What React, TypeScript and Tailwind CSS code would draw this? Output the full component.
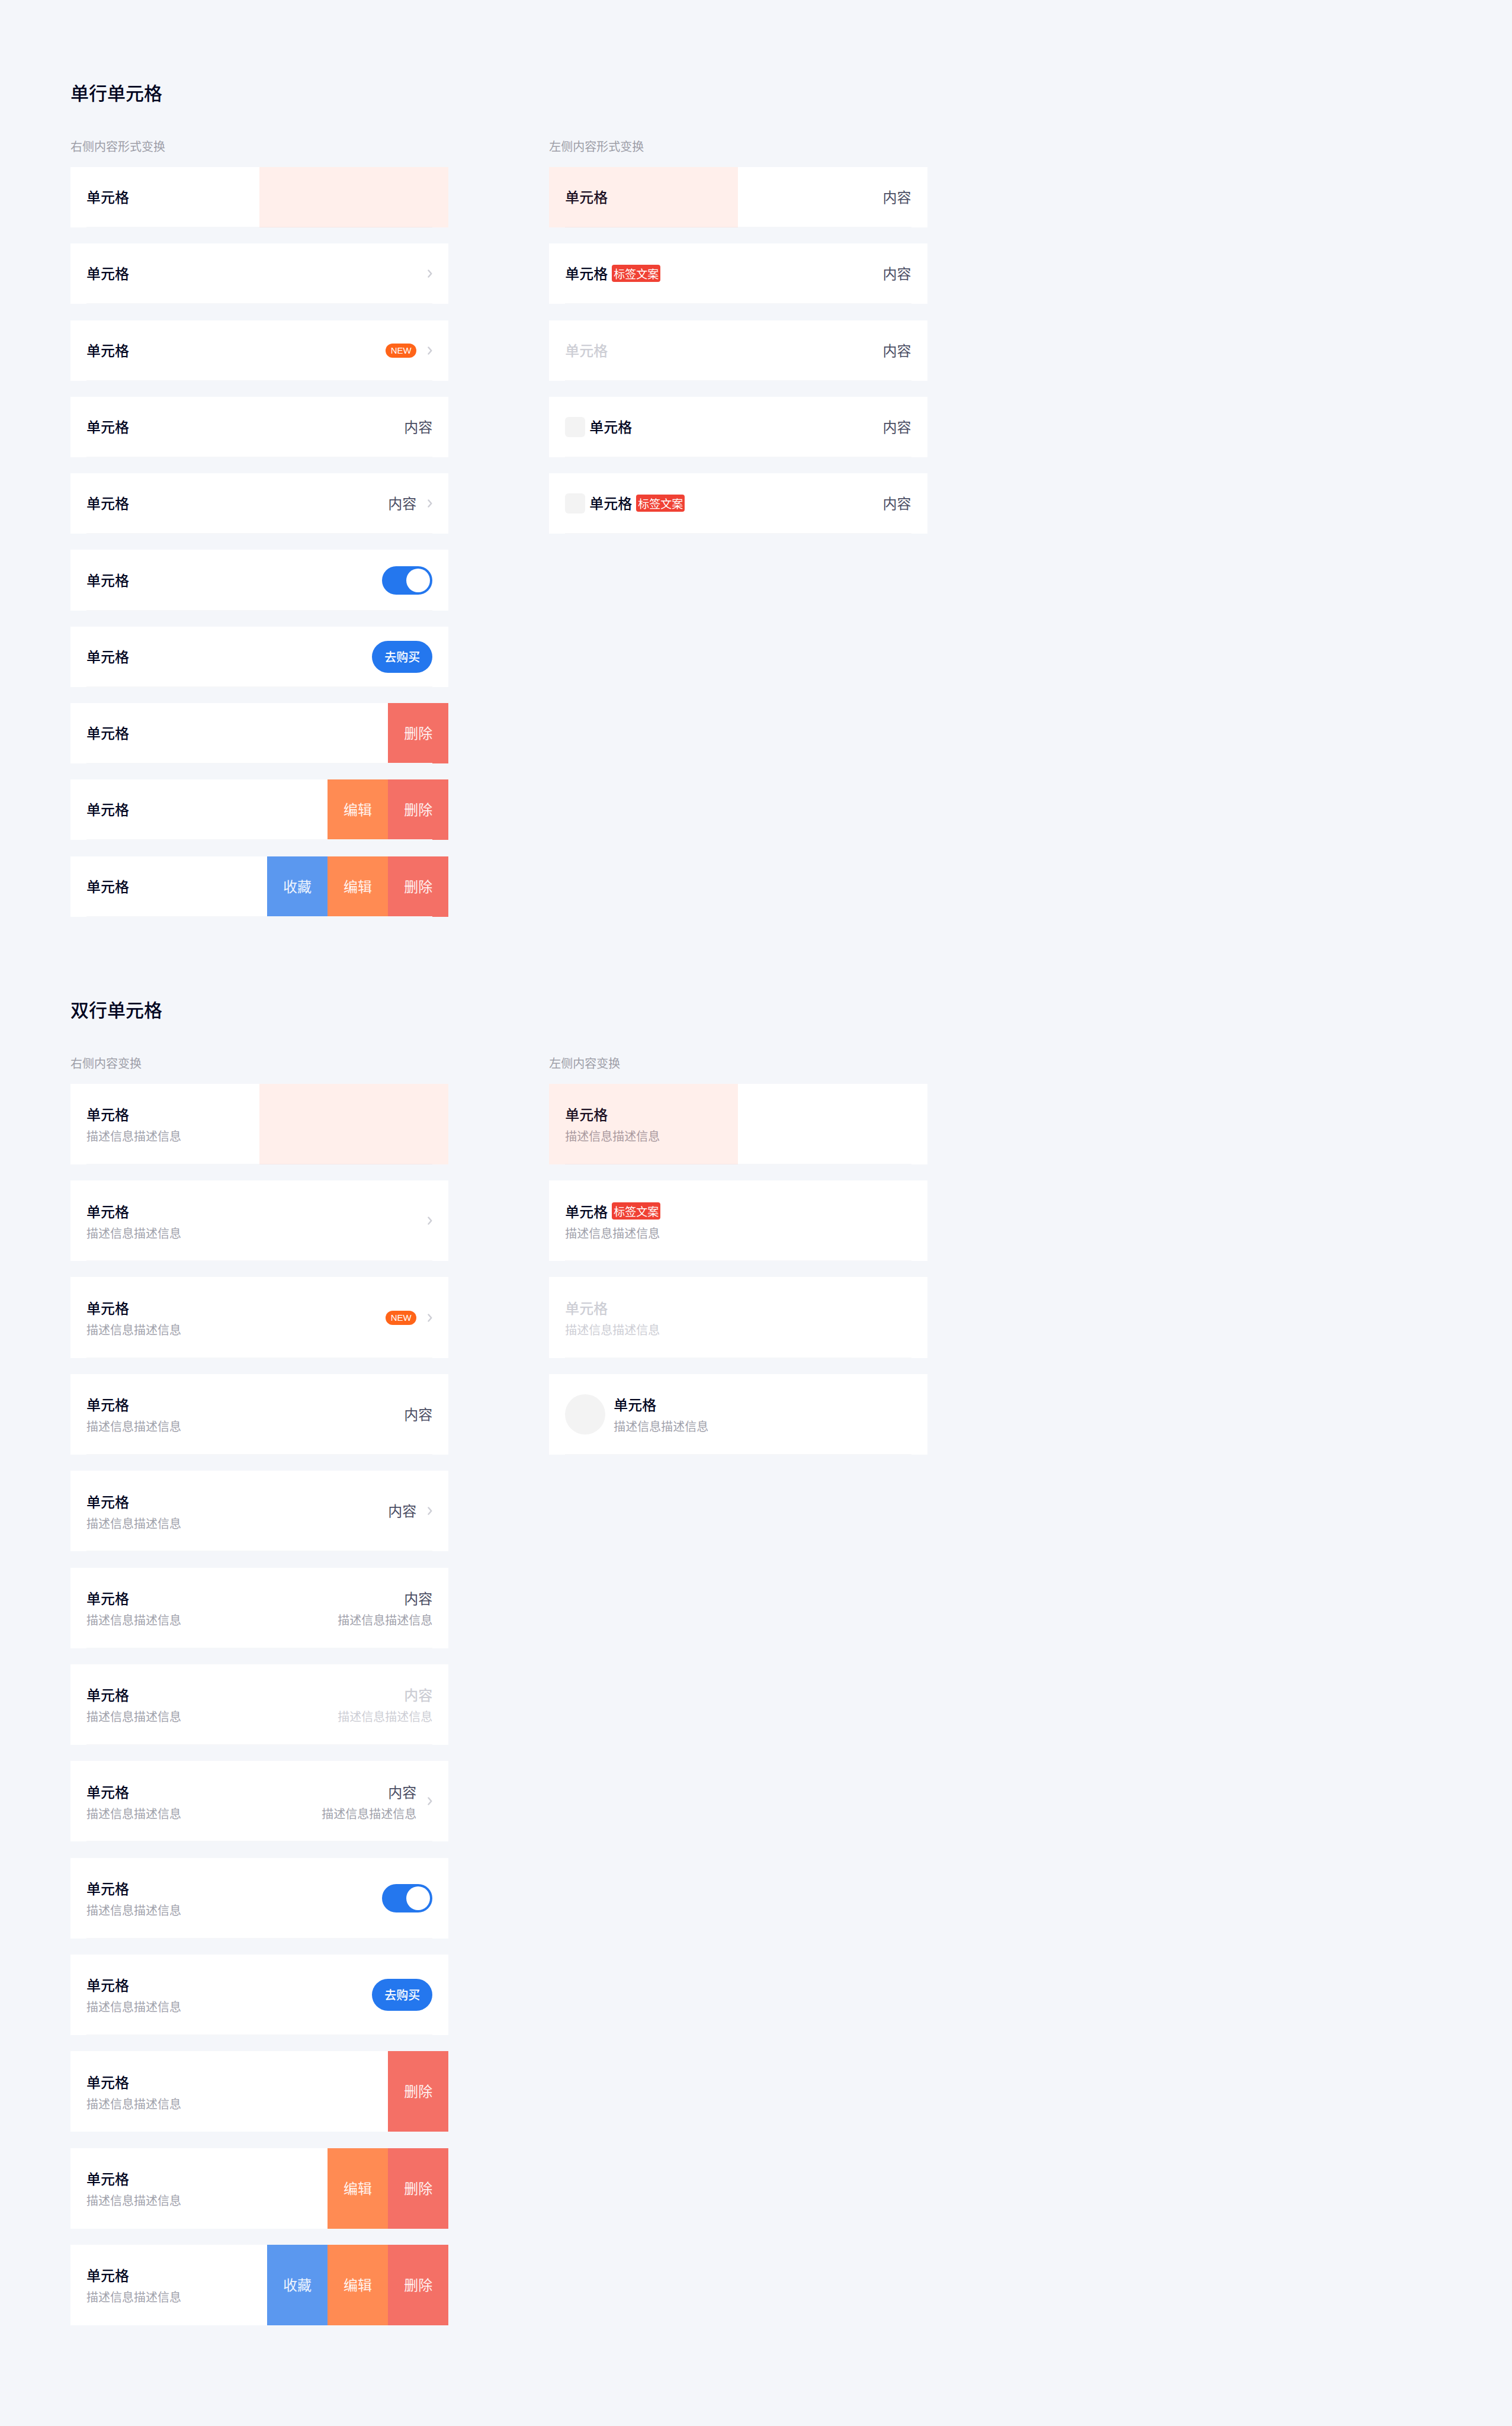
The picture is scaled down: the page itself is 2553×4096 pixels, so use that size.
import type { ReactNode } from "react";

function Chevron() {
  return (
    <svg className="h-[14px] w-2 shrink-0" viewBox="0 0 8 14" fill="none" aria-hidden="true">
      <path
        d="M1.5 1.5 L6.3 7 L1.5 12.5"
        stroke="#cdced5"
        strokeWidth="2.4"
        strokeLinecap="round"
        strokeLinejoin="round"
      />
    </svg>
  );
}

function NewBadge() {
  return (
    <span className="flex h-6 w-[52px] items-center justify-center rounded-full bg-[#ff6419] font-['Liberation_Sans',sans-serif] text-[15px] leading-6 text-white">
      NEW
    </span>
  );
}

function Tag() {
  return (
    <span className="rounded-[4px] bg-[#f04134] px-[3px] text-[19px] leading-[29px] text-white">标签文案</span>
  );
}

function Toggle() {
  return (
    <label className="relative flex h-12 w-[85px] cursor-pointer items-center">
      <input
        type="checkbox"
        role="switch"
        aria-label="单元格"
        defaultChecked
        className="peer h-full w-full cursor-pointer appearance-none rounded-full bg-gray-300 checked:bg-[#2477ee]"
      />
      <span className="pointer-events-none absolute left-1 size-10 rounded-full bg-white peer-checked:right-1 peer-checked:left-auto" />
    </label>
  );
}

function BuyButton() {
  return (
    <button type="button" className="h-[54px] w-[102px] rounded-full bg-[#2477ee] text-[20px] font-medium text-white">
      去购买
    </button>
  );
}

function Content({ desc, muted }: { desc?: string; muted?: boolean }) {
  return (
    <span className={`flex flex-col items-end gap-[5px] ${desc ? "" : "pb-[2px]"}`}>
      <span
        className={
          muted ? "text-[24px] leading-9 font-medium text-[#cdced5]" : "text-[24px] leading-9 text-[#4a4d63]"
        }
      >
        内容
      </span>
      {desc && (
        <span className={muted ? "text-[20px] leading-7 text-[#cdced5]" : "text-[20px] leading-7 text-[#a0a1ab]"}>
          {desc}
        </span>
      )}
    </span>
  );
}

const ACTIONS = {
  收藏: "bg-[#5b98ef]",
  编辑: "bg-[#ff8b53]",
  删除: "bg-[#f47066]",
};

type CellProps = {
  double?: boolean;
  media?: ReactNode;
  tag?: boolean;
  muted?: boolean;
  right?: ReactNode;
  arrow?: boolean;
  highlight?: "left" | "right";
  actions?: (keyof typeof ACTIONS)[];
};

function Cell({ double, media, tag, muted, right, arrow, highlight, actions }: CellProps) {
  return (
    <li
      className={`relative flex items-center bg-white px-[27px] ${double ? "aspect-[75/16]" : "aspect-[25/4]"}`}
    >
      {media}
      <div className={`flex flex-col gap-[5px] ${double ? "" : "pb-[2px]"}`}>
        <div className="flex items-center gap-[7px]">
          <span
            className={
              muted
                ? "text-[24px] leading-9 font-medium text-[#cdced5]"
                : "text-[24px] leading-9 font-medium text-[#02061f]"
            }
          >
            单元格
          </span>
          {tag && <Tag />}
        </div>
        {double && (
          <span
            className={muted ? "text-[20px] leading-7 text-[#cdced5]" : "text-[20px] leading-7 text-[#a0a1ab]"}
          >
            描述信息描述信息
          </span>
        )}
      </div>
      <div className="ml-auto flex items-center gap-[19px]">
        {right}
        {arrow && <Chevron />}
      </div>
      {!(double && actions) && <span className="absolute inset-x-[27px] bottom-0 z-10 h-px bg-[#f5f6f8]" />}
      {actions && (
        <div className="absolute inset-y-0 right-0 flex w-[48%] justify-end">
          {actions.map((name) => (
            <button key={name} type="button" className={`w-1/3 pb-[2px] text-[24px] text-white/90 ${ACTIONS[name]}`}>
              {name}
            </button>
          ))}
        </div>
      )}
      {highlight && (
        <span
          className={`absolute inset-y-0 z-20 w-1/2 bg-[#ff5f3c]/10 ${highlight === "left" ? "left-0" : "right-0"}`}
        />
      )}
    </li>
  );
}

function Column({ title, children }: { title: string; children: ReactNode }) {
  return (
    <div className="w-[25vw] shrink-0">
      <h3 className="text-[20px] leading-[30px] text-[#9d9ea8]">{title}</h3>
      <ul className="mt-5 flex flex-col gap-[1.065vw]">{children}</ul>
    </div>
  );
}

function Section({ title, children }: { title: string; children: ReactNode }) {
  return (
    <section>
      <h2 className="px-[119px] text-[31px] leading-[44px] font-medium text-[#02061f]">{title}</h2>
      <div className="mt-[54px] flex gap-[170px] pl-[119px]">{children}</div>
    </section>
  );
}

const DESC = "描述信息描述信息";

export default function App() {
  const square = <span className="mr-[7px] size-[34px] rounded-[6px] bg-[#f3f3f3]" />;
  const avatar = <span className="mr-[14px] size-[68px] rounded-full bg-[#f3f3f3]" />;

  return (
    <main className="flex min-h-screen flex-col gap-[134px] bg-[#f4f6fa] pt-[134px] pb-[134px] font-['Noto_Sans_CJK_SC',sans-serif]">
      <Section title="单行单元格">
        <Column title="右侧内容形式变换">
          <Cell highlight="right" />
          <Cell arrow />
          <Cell right={<NewBadge />} arrow />
          <Cell right={<Content />} />
          <Cell right={<Content />} arrow />
          <Cell right={<Toggle />} />
          <Cell right={<BuyButton />} />
          <Cell actions={["删除"]} />
          <Cell actions={["编辑", "删除"]} />
          <Cell actions={["收藏", "编辑", "删除"]} />
        </Column>
        <Column title="左侧内容形式变换">
          <Cell highlight="left" right={<Content />} />
          <Cell tag right={<Content />} />
          <Cell muted right={<Content />} />
          <Cell media={square} right={<Content />} />
          <Cell media={square} tag right={<Content />} />
        </Column>
      </Section>

      <Section title="双行单元格">
        <Column title="右侧内容变换">
          <Cell double highlight="right" />
          <Cell double arrow />
          <Cell double right={<NewBadge />} arrow />
          <Cell double right={<Content />} />
          <Cell double right={<Content />} arrow />
          <Cell double right={<Content desc={DESC} />} />
          <Cell double right={<Content desc={DESC} muted />} />
          <Cell double right={<Content desc={DESC} />} arrow />
          <Cell double right={<Toggle />} />
          <Cell double right={<BuyButton />} />
          <Cell double actions={["删除"]} />
          <Cell double actions={["编辑", "删除"]} />
          <Cell double actions={["收藏", "编辑", "删除"]} />
        </Column>
        <Column title="左侧内容变换">
          <Cell double highlight="left" />
          <Cell double tag />
          <Cell double muted />
          <Cell double media={avatar} />
        </Column>
      </Section>
    </main>
  );
}
